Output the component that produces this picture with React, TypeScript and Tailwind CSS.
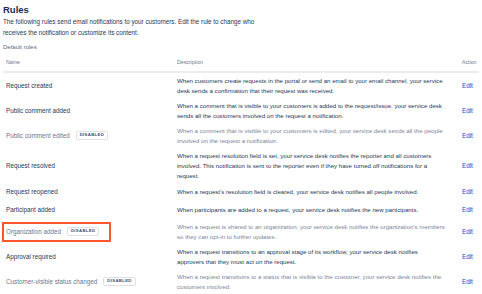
import React from "react";

type Rule = {
  name: string;
  desc: string[];
  disabled?: boolean;
  highlight?: boolean;
};

const rules: Rule[] = [
  {
    name: "Request created",
    desc: [
      "When customers create requests in the portal or send an email to your email channel, your service",
      "desk sends a confirmation that their request was received.",
    ],
  },
  {
    name: "Public comment added",
    desc: [
      "When a comment that is visible to your customers is added to the request/issue, your service desk",
      "sends all the customers involved on the request a notification.",
    ],
  },
  {
    name: "Public comment edited",
    disabled: true,
    desc: [
      "When a comment that is visible to your customers is edited, your service desk sends all the people",
      "involved on the request a notification.",
    ],
  },
  {
    name: "Request resolved",
    desc: [
      "When a request resolution field is set, your service desk notifies the reporter and all customers",
      "involved. This notification is sent to the reporter even if they have turned off notifications for a",
      "request.",
    ],
  },
  {
    name: "Request reopened",
    desc: ["When a request's resolution field is cleared, your service desk notifies all people involved."],
  },
  {
    name: "Participant added",
    desc: ["When participants are added to a request, your service desk notifies the new participants."],
  },
  {
    name: "Organization added",
    disabled: true,
    highlight: true,
    desc: [
      "When a request is shared to an organization, your service desk notifies the organization's members",
      "so they can opt-in to further updates.",
    ],
  },
  {
    name: "Approval required",
    desc: [
      "When a request transitions to an approval stage of its workflow, your service desk notifies",
      "approvers that they must act on the request.",
    ],
  },
  {
    name: "Customer-visible status changed",
    disabled: true,
    desc: [
      "When a request transitions to a status that is visible to the customer, your service desk notifies the",
      "customers involved.",
    ],
  },
];

function Badge() {
  return (
    <span className="ml-[6px] inline-flex h-[9px] items-center rounded-[2px] border border-[#dfe1e6] px-[3px] text-[4.3px] font-bold leading-none tracking-[0.3px] text-[#42526e]">
      DISABLED
    </span>
  );
}

export default function App() {
  return (
    <div className="h-[294px] w-[482px] overflow-hidden bg-white px-[3px] pt-[4px] font-['Liberation_Sans',Arial,sans-serif] text-[6.3px] leading-[10px] text-[#253858]">
      <h1 className="text-[9.5px] font-bold leading-[11px] text-[#172b4d]">Rules</h1>
      <p className="mt-[2px] w-[262px] text-[6.3px] leading-[10.5px] text-[#253858]">
        The following rules send email notifications to your customers. Edit the rule to change who receives the
        notification or customize its content.
      </p>
      <div className="mt-[4px] text-[6px] text-[#5e6c84]">Default rules</div>

      {/* header */}
      <div className="mt-[5px] flex border-b-2 border-[#ebecf0] pb-[4px] text-[5.2px] text-[#6b778c]">
        <div className="w-[174px] shrink-0 pl-[3px]">Name</div>
        <div className="flex-1">Description</div>
        <div className="w-[17px] shrink-0">Action</div>
      </div>

      {/* rows */}
      <div className="border-b-2 border-[#ebecf0]">
        {rules.map((r) => (
          <div key={r.name} className="flex min-h-[18px] items-center py-[2.5px]">
            <div className="w-[174px] shrink-0 self-stretch">
              <div
                className={
                  r.highlight
                    ? "-ml-[1px] flex h-full w-[109px] items-center border-2 border-[#ff5630] pl-[2px]"
                    : "flex h-full items-center pl-[3px]"
                }
              >
                <span className={r.disabled ? "text-[#6b778c]" : "text-[#253858]"}>{r.name}</span>
                {r.disabled && <Badge />}
              </div>
            </div>
            <div className={`min-w-0 flex-1 text-[6.1px] ${r.disabled ? "text-[#7a869a]" : "text-[#253858]"}`}>
              {r.desc.map((l) => (
                <div key={l} className="whitespace-nowrap">
                  {l}
                </div>
              ))}
            </div>
            <div className="w-[17px] shrink-0 text-[#0052cc]">Edit</div>
          </div>
        ))}
      </div>
    </div>
  );
}
